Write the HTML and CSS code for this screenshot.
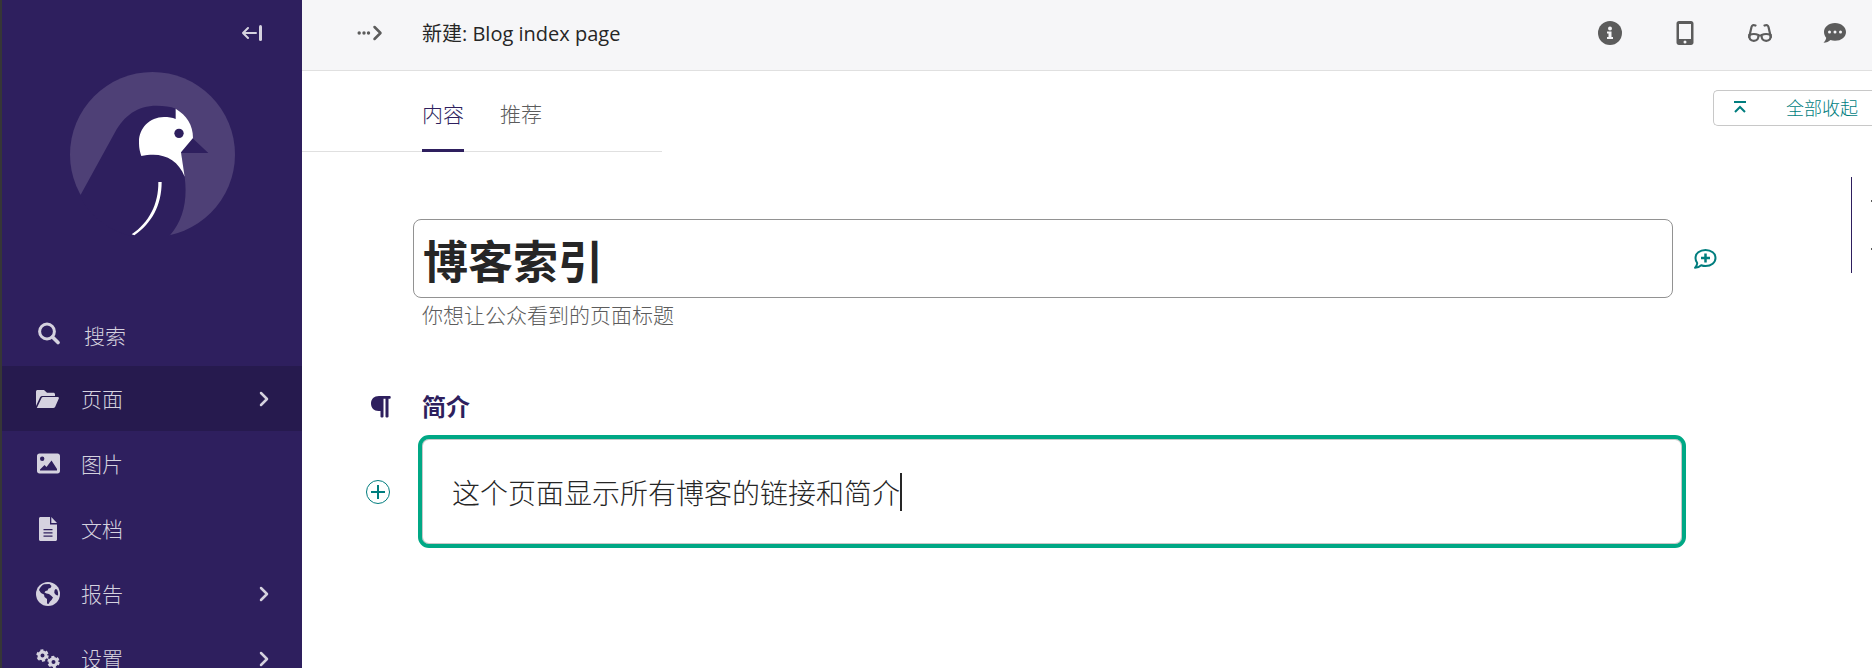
FILE: index.html
```html
<!DOCTYPE html>
<html lang="zh-CN">
<head>
    <meta charset="UTF-8">
    <meta name="viewport" content="width=device-width, initial-scale=1.0">
    <title>新建: Blog index page</title>
    <link rel="stylesheet" href="styles.css">
</head>
<body>
    <aside class="sidebar">
        <div class="sidebar-top">
            <button type="button" class="icon-btn" aria-label="收起菜单">
                <svg width="22" height="18" viewBox="0 0 22 18" fill="none" stroke="currentColor" stroke-width="2" stroke-linecap="round" stroke-linejoin="round">
                    <path d="M14 9H1M6 4L1 9L6 14"/>
                    <path d="M18.500 2.500V15.500" stroke-width="3"/>
                </svg>
            </button>
        </div>

        <a href="#" class="logo" aria-label="Wagtail">
            <svg width="165" height="165" viewBox="210 216 495 495">
                <circle cx="457.5" cy="463.5" r="247.5" fill="#4e4076"/>
                <path fill="#2e1f5e" d="M242 584L345 397C372 347 412 317 470 317C492 317 511 319 528 326L578 415L625 459H543L554 530C563 600 550 660 510 706L500 714C400 725 290 690 240 588Z"/>
                <path fill="#fff" d="M527 326C560 346 579 375 579 414L543 457L554 530C537 486 502 464 460 464C447 464 435 465 424 468C418 450 417 440 417 425C417 385 449 351 492 351C505 351 517 353 527 357Z"/>
                <circle cx="537" cy="400" r="14" fill="#2e1f5e"/>
                <path fill="#fff" d="M475 546H485C485 616 455 670 403 706L395 703C447 668 476 612 475 546Z"/>
            </svg>
        </a>

        <nav class="menu">
            <button type="button" class="menu-item menu-search">
                <svg width="24" height="24" viewBox="0 0 24 24" fill="none" stroke="currentColor">
                    <circle cx="11" cy="9.500" r="7.400" stroke-width="3"/>
                    <path d="M16.500 15L22 20.500" stroke-width="3.600" stroke-linecap="round"/>
                </svg>
                <span>搜索</span>
            </button>
            <a href="#" class="menu-item active">
                <svg width="24" height="24" viewBox="0 0 24 24" fill="currentColor">
                    <path d="M0 19V4.500C0 3.700.7 3 1.500 3H8L11 5.800H17.500C18.300 5.800 19 6.500 19 7.300V9H6.500C5.300 9 4.600 9.500 4 10.500Z"/>
                    <path d="M.8 21L5.300 11.500C5.700 10.500 6.200 10 7.200 10H21.800C22.800 10 23.200 10.800 22.800 11.600L19.300 19.600C18.900 20.600 18.400 21 17.400 21Z"/>
                </svg>
                <span>页面</span>
                <svg class="chevron" width="10" height="16" viewBox="0 0 10 16"><path d="M2 2L8 8L2 14"/></svg>
            </a>
            <a href="#" class="menu-item">
                <svg width="24" height="24" viewBox="0 0 24 24" fill="currentColor">
                    <path fill-rule="evenodd" d="M3.500 1.500H21.500C23 1.500 24 2.500 24 4V19C24 20.500 23 21.500 21.500 21.500H3.500C2 21.500 1 20.500 1 19V4C1 2.500 2 1.500 3.500 1.500ZM6.200 4.500A2.200 2.200 0 1 0 6.200 8.900A2.200 2.200 0 1 0 6.200 4.500ZM4 18.500H21V17L15.500 8.500L10.500 15L8.500 13L4 17.500Z"/>
                </svg>
                <span>图片</span>
            </a>
            <a href="#" class="menu-item">
                <svg width="24" height="24" viewBox="0 0 24 24" fill="currentColor">
                    <path fill-rule="evenodd" d="M4.500 0H14V7.500H21V22.500C21 23.300 20.300 24 19.500 24H4.500C3.700 24 3 23.300 3 22.500V1.500C3 .7 3.700 0 4.500 0ZM7.500 12V13.300H16.500V12ZM7.500 15.300V16.600H16.500V15.300ZM7.500 18.500V19.800H16.500V18.500Z"/>
                    <path d="M15.300 0L21 6H15.300Z"/>
                </svg>
                <span>文档</span>
            </a>
            <a href="#" class="menu-item">
                <svg width="24" height="24" viewBox="0 0 24 24">
                    <circle cx="12" cy="12" r="12" fill="currentColor"/>
                    <path fill="#2e1f5e" d="M8 2.200L13.500 2L15.500 4L14.500 6L12.500 6.500L11.500 8.500L9.500 9L8.500 10.500L10.500 11.500L13 12L15.500 14L17 15.500L15.500 18L14 19.500L12.500 22L11 21.500V17L8.500 15L8 12.500L5 11L3 8C4 5.500 5.500 3.500 8 2.200Z"/>
                    <path fill="#2e1f5e" d="M19.500 7L21 7.500C22 9.500 22.300 11.500 22 13.500L20 13L18.300 11L18.500 8.500Z"/>
                </svg>
                <span>报告</span>
                <svg class="chevron" width="10" height="16" viewBox="0 0 10 16"><path d="M2 2L8 8L2 14"/></svg>
            </a>
            <a href="#" class="menu-item">
                <svg width="24" height="24" viewBox="0 0 24 24" fill="none" stroke="currentColor">
                    <circle cx="6.500" cy="8.500" r="3.500" stroke-width="3"/>
                    <circle cx="6.500" cy="8.500" r="5.200" stroke-width="2" stroke-dasharray="3 2.445"/>
                    <circle cx="17.500" cy="15" r="3.500" stroke-width="3"/>
                    <circle cx="17.500" cy="15" r="5.200" stroke-width="2" stroke-dasharray="3 2.445"/>
                </svg>
                <span>设置</span>
                <svg class="chevron" width="10" height="16" viewBox="0 0 10 16"><path d="M2 2L8 8L2 14"/></svg>
            </a>
        </nav>
    </aside>

    <main class="content">
        <header class="page-header">
            <button type="button" class="icon-btn breadcrumb-toggle" aria-label="展开路径">
                <svg width="26" height="18" viewBox="0 0 26 18" fill="currentColor">
                    <circle cx="2.200" cy="9" r="1.700"/>
                    <circle cx="7" cy="9" r="1.700"/>
                    <circle cx="11.500" cy="9" r="1.700"/>
                    <path d="M17.500 3L23.500 9L17.500 15" fill="none" stroke="currentColor" stroke-width="2.500" stroke-linecap="round" stroke-linejoin="round"/>
                </svg>
            </button>
            <h1>新建: Blog index page</h1>
            <div class="header-actions">
                <button type="button" class="icon-btn" aria-label="状态">
                    <svg width="24" height="24" viewBox="0 0 24 24">
                        <circle cx="12" cy="12" r="12" fill="currentColor"/>
                        <circle cx="12" cy="7.500" r="2" fill="#f6f6f8"/>
                        <path fill="#f6f6f8" d="M9 10.500H13.500V16H15V18H9V16H10.500V12.500H9Z"/>
                    </svg>
                </button>
                <button type="button" class="icon-btn" aria-label="预览">
                    <svg width="24" height="24" viewBox="0 0 24 24" fill="currentColor">
                        <path fill-rule="evenodd" d="M6 0H18C19.500 0 20.500 1 20.500 2.500V21.500C20.500 23 19.500 24 18 24H6C4.500 24 3.500 23 3.500 21.500V2.500C3.500 1 4.500 0 6 0ZM6 3V18H18V3ZM12 19.500A1.500 1.500 0 1 0 12 22.500A1.500 1.500 0 1 0 12 19.500Z"/>
                    </svg>
                </button>
                <button type="button" class="icon-btn" aria-label="检查">
                    <svg width="24" height="24" viewBox="0 0 24 24" fill="none" stroke="currentColor" stroke-width="2.200" stroke-linecap="round">
                        <path d="M1.200 16L3.500 6C4 4.200 5.200 3.700 7.500 4.500M22.800 16L20.500 6C20 4.200 18.800 3.700 16.500 4.500"/>
                        <path d="M1.300 14Q6 12 10.300 14C10.800 18 9 19.800 5.800 19.800C2.500 19.800 1 18 1.300 14ZM22.700 14Q18 12 13.700 14C13.200 18 15 19.800 18.200 19.800C21.500 19.800 23 18 22.700 14ZM10.300 15Q12 14 13.700 15"/>
                    </svg>
                </button>
                <button type="button" class="icon-btn" aria-label="评论">
                    <svg width="24" height="24" viewBox="0 0 24 24">
                        <path fill="currentColor" d="M12 2C18.300 2 23 6 23 11C23 16 18.300 19.800 12 19.800C10.300 19.800 8.800 19.500 7.500 19C5.800 20.500 3.500 21.700.5 21.800C2.100 20 3 18.500 3.200 16.700C1.800 15 1 13.200 1 11C1 6 5.700 2 12 2Z"/>
                        <g fill="#f6f6f8">
                            <circle cx="6.500" cy="11" r="1.500"/>
                            <circle cx="12" cy="11" r="1.500"/>
                            <circle cx="17.500" cy="11" r="1.500"/>
                        </g>
                    </svg>
                </button>
            </div>
        </header>

        <div class="subheader">
            <div class="tabs" role="tablist">
                <a href="#content" class="tab active" role="tab" aria-selected="true">内容</a>
                <a href="#promote" class="tab" role="tab" aria-selected="false">推荐</a>
            </div>
            <button type="button" class="collapse-btn">
                <svg width="12" height="12" viewBox="0 0 12 12" fill="none" stroke="currentColor" stroke-width="2">
                    <path d="M0 1H12M1 11L6 6L11 11"/>
                </svg>
                <span>全部收起</span>
            </button>
        </div>

        <div class="form-area">
            <form class="page-form">
                <div class="title-row">
                    <input type="text" id="title" class="title-input" value="博客索引" aria-label="标题" aria-describedby="title-help">
                    <button type="button" class="icon-btn comment-btn" aria-label="添加评论">
                        <svg width="24" height="24" viewBox="0 0 24 24" fill="none" stroke="currentColor" stroke-width="2">
                            <path stroke-linejoin="round" d="M12.500 3C18.300 3 22.500 6.500 22.500 11C22.500 15.500 18.300 19 12.500 19C10.800 19 9.500 18.700 8.200 18.200C6.500 19.800 4.500 20.700 2 20.800C3.300 19.300 4.300 17.800 4.200 16C3 14.500 2.500 13 2.500 11C2.500 6.500 6.700 3 12.500 3Z"/>
                            <path d="M12.500 6.500V15.500M8 11H17" stroke-width="2.500"/>
                        </svg>
                    </button>
                </div>
                <p class="help" id="title-help">你想让公众看到的页面标题</p>

                <div class="field-label">
                    <svg width="20" height="22" viewBox="0 0 20 22" fill="currentColor">
                        <path d="M8 0H19C20 0 20 2.800 19 2.800H17.500V20.500C17.500 21.800 14.500 21.800 14.500 20.500V2.800H12.500V20.500C12.500 21.800 9.500 21.800 9.500 20.500V15H7.500C3 15 0 12 0 7.500C0 3 3 0 8 0Z"/>
                    </svg>
                    <label for="intro">简介</label>
                </div>
                <div class="editor-row">
                    <button type="button" class="icon-btn add-btn" aria-label="插入区块">
                        <svg width="24" height="24" viewBox="0 0 24 24" fill="none" stroke="currentColor">
                            <circle cx="12" cy="12" r="11.500"/>
                            <path d="M12 5V19M5 12H19" stroke-width="2"/>
                        </svg>
                    </button>
                    <div class="editor">
                        <input type="text" id="intro" value="这个页面显示所有博客的链接和简介">
                        <span class="caret"></span>
                    </div>
                </div>
            </form>
            <div class="minimap">
                <span class="minimap-mark"></span>
                <span class="minimap-mark"></span>
            </div>
        </div>
    </main>
</body>
</html>
```

FILE: styles.css
```css
:root {
    --primary: #2e1f5e;
    --primary-dark: #261a4e;
    --teal: #007d7e;
    --green: #00a885;
    --text: #262626;
    --gray: #5c5c5c;
    --line: #e0e0e0;
    --menu-text: #d5d2df;
}

* {
    box-sizing: border-box;
}

body {
    margin: 0;
    height: 100vh;
    display: flex;
    overflow: hidden;
    font-family: "Open Sans", "Noto Sans CJK SC", sans-serif;
    font-size: 21px;
    font-weight: 300;
    color: var(--text);
    background: #fff;
}

button {
    font: inherit;
    cursor: pointer;
}

a {
    text-decoration: none;
}

svg {
    display: block;
    flex-shrink: 0;
}

.icon-btn {
    padding: 0;
    border: none;
    background: none;
    color: inherit;
}

/* sidebar */
.sidebar {
    width: 302px;
    flex-shrink: 0;
    border-left: 2px solid #363636;
    background: var(--primary);
    color: var(--menu-text);
}

.sidebar-top {
    display: flex;
    justify-content: flex-end;
    align-items: center;
    height: 66px;
    padding-right: 38px;
}

.logo {
    display: flex;
    justify-content: center;
    padding: 6px 0 64px;
}

.menu-item {
    display: flex;
    align-items: center;
    gap: 21px;
    width: 100%;
    height: 65px;
    padding: 0 33px 0 34px;
    border: none;
    background: none;
    color: inherit;
    line-height: 28px;
    text-align: left;
}

.menu-search {
    gap: 24px;
}

.menu-search span {
    padding-top: 4px;
}

.menu-item.active {
    background: var(--primary-dark);
}

.chevron {
    margin-left: auto;
    fill: none;
    stroke: currentColor;
    stroke-width: 2.5;
    stroke-linecap: round;
    stroke-linejoin: round;
}

/* main */
.content {
    flex: 1;
    min-width: 0;
}

.page-header {
    display: flex;
    align-items: center;
    height: 71px;
    padding: 0 25px 4px 55px;
    background: #f6f6f8;
    border-bottom: 1px solid var(--line);
}

.page-header h1 {
    margin: 0 0 0 39px;
    padding-bottom: 2px;
    font-size: 20px;
    font-weight: 400;
}

.breadcrumb-toggle,
.header-actions {
    color: var(--gray);
}

.header-actions {
    display: flex;
    gap: 51px;
    margin-left: auto;
}

.subheader {
    display: flex;
    justify-content: space-between;
    align-items: flex-start;
}

.tabs {
    display: flex;
    gap: 36px;
    width: 360px;
    height: 81px;
    padding-left: 120px;
    border-bottom: 1px solid var(--line);
}

.tab {
    height: 81px;
    line-height: 86px;
    color: var(--gray);
}

.tab.active {
    color: var(--primary);
    border-bottom: 3px solid var(--primary);
}

.collapse-btn {
    display: flex;
    align-items: center;
    gap: 40px;
    height: 36px;
    margin-top: 19px;
    padding: 0 14px 2px 20px;
    border: 1px solid #c8c8c8;
    border-right: none;
    border-radius: 5px 0 0 5px;
    background: #fff;
    color: var(--teal);
    font-size: 18px;
}

.form-area {
    display: flex;
    align-items: flex-start;
    padding-top: 25px;
}

.page-form {
    flex: 1;
    min-width: 0;
    padding: 42px 134px 0 64px;
}

.title-row {
    display: flex;
    align-items: center;
    gap: 20px;
    padding-left: 47px;
}

.title-input {
    flex: 1;
    min-width: 0;
    height: 79px;
    padding: 2px 9px 0;
    border: 1px solid #929292;
    border-radius: 8px;
    font: inherit;
    font-size: 45px;
    font-weight: 700;
    color: var(--text);
}

.comment-btn {
    color: var(--teal);
}

.help {
    margin: 1px 0 0 56px;
    line-height: 32px;
    color: var(--gray);
}

.field-label {
    display: flex;
    align-items: center;
    gap: 31px;
    margin-top: 58px;
    padding-left: 5px;
    font-size: 24px;
    line-height: 36px;
    font-weight: 700;
    color: var(--primary);
}

.editor-row {
    display: flex;
    align-items: center;
    gap: 28px;
    margin-top: 10px;
}

.add-btn {
    color: var(--teal);
}

.editor {
    display: flex;
    align-items: center;
    flex: 1;
    height: 113px;
    margin-right: 31px;
    padding-left: 30px;
    border: 4px solid var(--green);
    border-radius: 11px;
    box-shadow: inset 0 0 0 1px #c8c8c8;
}

.editor input {
    width: 16em;
    padding: 0;
    border: none;
    outline: none;
    background: none;
    font: inherit;
    font-size: 28px;
    color: var(--text);
}

.caret {
    width: 2px;
    height: 38px;
    background: var(--text);
}

.minimap {
    display: flex;
    flex-direction: column;
    align-items: flex-end;
    gap: 46px;
    width: 21px;
    height: 96px;
    padding-top: 23px;
    border-left: 1px solid var(--primary);
}

.minimap-mark {
    width: 1px;
    height: 2px;
    background: var(--gray);
}
```
